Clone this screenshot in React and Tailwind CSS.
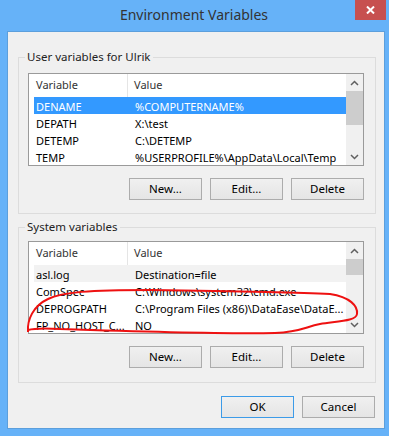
import React from 'react';

const font = { fontFamily: '"Segoe UI", "Noto Sans", sans-serif' };

const userRows = [
  { name: 'DENAME', value: '%COMPUTERNAME%', state: 'selected' },
  { name: 'DEPATH', value: 'X:\\test' },
  { name: 'DETEMP', value: 'C:\\DETEMP' },
  { name: 'TEMP', value: '%USERPROFILE%\\AppData\\Local\\Temp' },
];

const systemRows = [
  { name: 'asl.log', value: 'Destination=file', state: 'dim' },
  { name: 'ComSpec', value: 'C:\\Windows\\system32\\cmd.exe' },
  { name: 'DEPROGPATH', value: 'C:\\Program Files (x86)\\DataEase\\DataE...' },
  { name: 'FP_NO_HOST_C...', value: 'NO' },
];

function Chevron({ up }) {
  return (
    <svg width="9" height="6" viewBox="0 0 9 6">
      <polyline
        points={up ? '1,5 4.5,1.5 8,5' : '1,1 4.5,4.5 8,1'}
        fill="none"
        stroke="#606060"
        strokeWidth="1.5"
      />
    </svg>
  );
}

function VarList({ rows, thumbHeight }) {
  return (
    <div className="flex h-[93px] w-[336px] border border-[#9a9a9a] bg-white">
      <div className="flex-1 flex flex-col">
        <div className="flex h-[24px] items-center text-[#333]">
          <div className="w-[99px] h-full flex items-center pl-[7px] border-r border-[#e5e5e5]">Variable</div>
          <div className="pl-[6px]">Value</div>
        </div>
        <div className="flex flex-col pl-[5px]">
          {rows.map((r) => (
            <div
              key={r.name}
              className={
                'flex h-[17px] items-center whitespace-nowrap leading-[17px] ' +
                (r.state === 'selected'
                  ? 'bg-[#3399ff] text-white'
                  : r.state === 'dim'
                  ? 'bg-[#f2f2f2] text-black'
                  : 'text-black')
              }
            >
              <div className="w-[94px] pl-[2px] pt-[2px]">{r.name}</div>
              <div className="pl-[7px] pt-[2px]">{r.value}</div>
            </div>
          ))}
        </div>
      </div>
      <div className="w-[17px] bg-[#f0f0f0] flex flex-col items-center">
        <div className="h-[17px] flex items-center justify-center">
          <Chevron up />
        </div>
        <div className="flex-1 w-full">
          <div className="w-full bg-[#cdcdcd]" style={{ height: thumbHeight }} />
        </div>
        <div className="h-[17px] flex items-center justify-center">
          <Chevron />
        </div>
      </div>
    </div>
  );
}

function Btn({ children, primary }) {
  return (
    <button
      className={
        'w-[73px] h-[22px] flex items-center justify-center border bg-gradient-to-b from-[#f0f0f0] to-[#e5e5e5] text-black text-[11.5px] ' +
        (primary ? 'border-[#3c9be8]' : 'border-[#acacac]')
      }
    >
      {children}
    </button>
  );
}

function Group({ label, children, className }) {
  return (
    <div className={'relative border border-[#dcdcdc] ' + className}>
      <span className="absolute left-[6px] -top-[9px] px-[2px] bg-[#f0f0f0] text-[#222] text-[11.5px] leading-[16px]">{label}</span>
      {children}
    </div>
  );
}

export default function App() {
  return (
    <div className="relative w-[394px] h-[439px] bg-white overflow-hidden text-[11px]" style={font}>
      <div className="w-[389px] bg-[#66b2f8] pl-[7px] pr-[4px] pb-[7px] relative">
        <div className="h-[31px] flex items-center justify-center pr-[4px] pb-[2px]">
          <span className="text-[14px] text-[#333]">Environment Variables</span>
        </div>
        <div className="absolute top-0 right-[3px] w-[31px] h-[20px] bg-[#c7504f] flex items-center justify-center">
          <svg width="9" height="8" viewBox="0 0 9 8">
            <path d="M1 0.5 L8 7.5 M8 0.5 L1 7.5" stroke="white" strokeWidth="2" />
          </svg>
        </div>
        <div className="h-[398px] bg-[#f0f0f0] border border-[#5c9fdc] flex flex-col pl-[10px]">
          <Group label="User variables for Ulrik" className="mt-[25px] w-[358px] h-[157px] pt-[15px] pl-[9px]">
            <VarList rows={userRows} thumbHeight={34} />
            <div className="flex justify-end gap-[8px] mt-[12px] w-[336px]">
              <Btn>New...</Btn>
              <Btn>Edit...</Btn>
              <Btn>Delete</Btn>
            </div>
          </Group>
          <Group label="System variables" className="mt-[13px] w-[358px] h-[156px] pt-[13px] pl-[9px]">
            <VarList rows={systemRows} thumbHeight={16} />
            <div className="flex justify-end gap-[8px] mt-[12px] w-[336px]">
              <Btn>New...</Btn>
              <Btn>Edit...</Btn>
              <Btn>Delete</Btn>
            </div>
          </Group>
          <div className="flex justify-end gap-[8px] mt-[13px] w-[357px]">
            <Btn primary>OK</Btn>
            <Btn>Cancel</Btn>
          </div>
        </div>
      </div>
      <div className="h-[3px] overflow-hidden pl-[183px] whitespace-nowrap leading-[14px] text-[11px]">
        <span className="text-[#222] relative top-[1px]">Windows is activated</span>
        <span className="text-[#1a5fb4] ml-[10px] relative top-[1px]">Read the privacy</span>
      </div>
      <svg className="absolute inset-0 pointer-events-none" width="394" height="439">
        <path
          d="M28 332 C27 320 33 306 48 299 C62 292 90 290 150 290 C220 291 290 292 330 294 C350 297 358 306 357 314 C356 321 340 321 320 324 C305 327 300 332 275 333 C220 334 120 331 60 329 C45 328 35 328 28 330"
          fill="none"
          stroke="#ee1111"
          strokeWidth="2"
        />
      </svg>
    </div>
  );
}
